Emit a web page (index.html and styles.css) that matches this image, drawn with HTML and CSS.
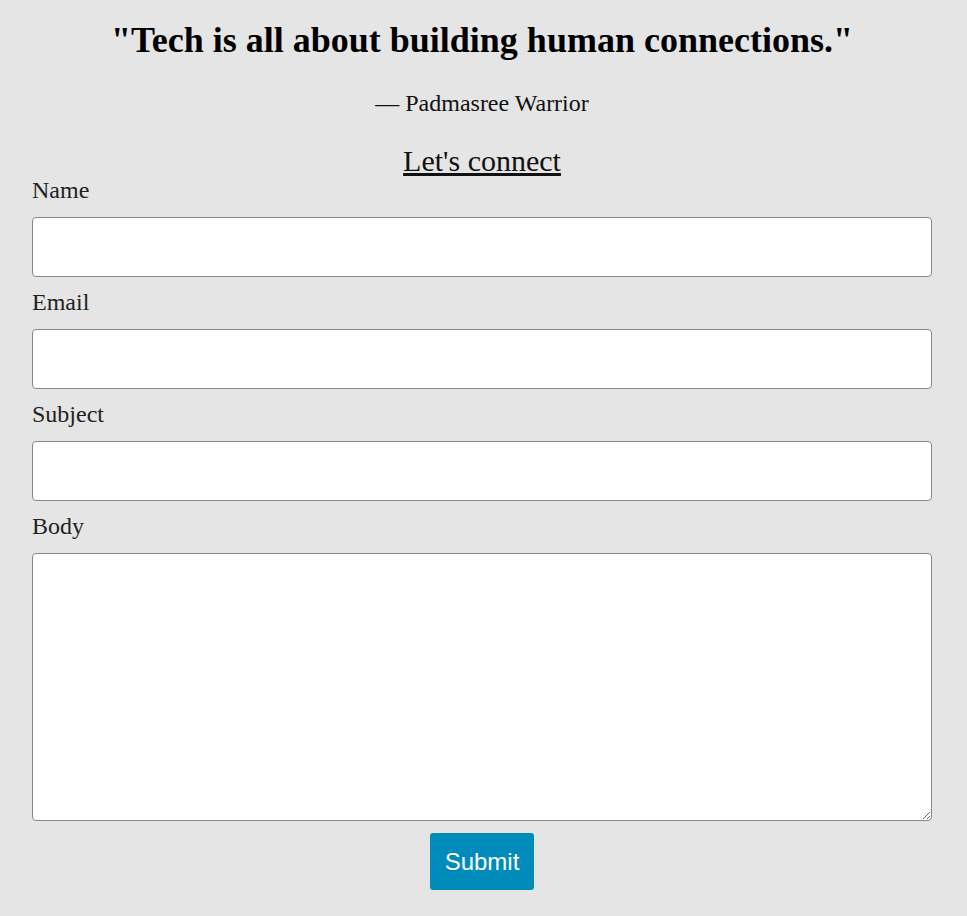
FILE: index.html
```html
<!DOCTYPE html>
<html>
<head>
<meta charset="utf-8">
<link rel="stylesheet" href="styles.css">
</head>
<body>
<div class="page">
  <h1 class="quote">"Tech is all about building human connections."</h1>
  <p class="author">— Padmasree Warrior</p>
  <h2 class="connect">Let's connect</h2>
  <form class="form">
    <label class="label" for="name">Name</label>
    <input class="field" id="name" type="text">
    <label class="label" for="email">Email</label>
    <input class="field" id="email" type="email">
    <label class="label" for="subject">Subject</label>
    <input class="field" id="subject" type="text">
    <label class="label" for="body">Body</label>
    <textarea class="field area" id="body"></textarea>
    <div class="actions"><button class="submit" type="button">Submit</button></div>
  </form>
</div>
</body>
</html>
```
FILE: styles.css
```css
html, body {
  margin: 0;
  padding: 0;
  background: #e5e5e5;
}
body {
  font-family: "Liberation Serif", "Times New Roman", serif;
  color: #111;
}
.page {
  width: 900px;
  padding: 0 32px;
}
.quote {
  margin: 18px 0 0;
  font-size: 36px;
  line-height: 44px;
  font-weight: bold;
  text-align: center;
  color: #000;
}
.author {
  margin: 28px 0 0;
  font-size: 24px;
  line-height: 26px;
  text-align: center;
}
.connect {
  margin: 29px 0 0;
  font-size: 30px;
  line-height: 32px;
  font-weight: normal;
  text-align: center;
  text-decoration: underline;
}
.form {
  display: flex;
  flex-direction: column;
}
.label {
  display: block;
  font-size: 24px;
  line-height: 26px;
  height: 40px;
  color: #222;
}
.field {
  box-sizing: border-box;
  width: 900px;
  height: 60px;
  margin: 0 0 12px;
  background: #fff;
  border: 1px solid #888;
  border-radius: 4px;
  font-family: inherit;
  font-size: 18px;
}
.area {
  height: 268px;
  resize: vertical;
}
.actions {
  display: flex;
  justify-content: center;
}
.submit {
  width: 104px;
  height: 57px;
  background: #008cba;
  color: #fff;
  border: none;
  border-radius: 3px;
  font-family: "Liberation Sans", Arial, sans-serif;
  font-size: 24px;
  padding: 0;
}
```
